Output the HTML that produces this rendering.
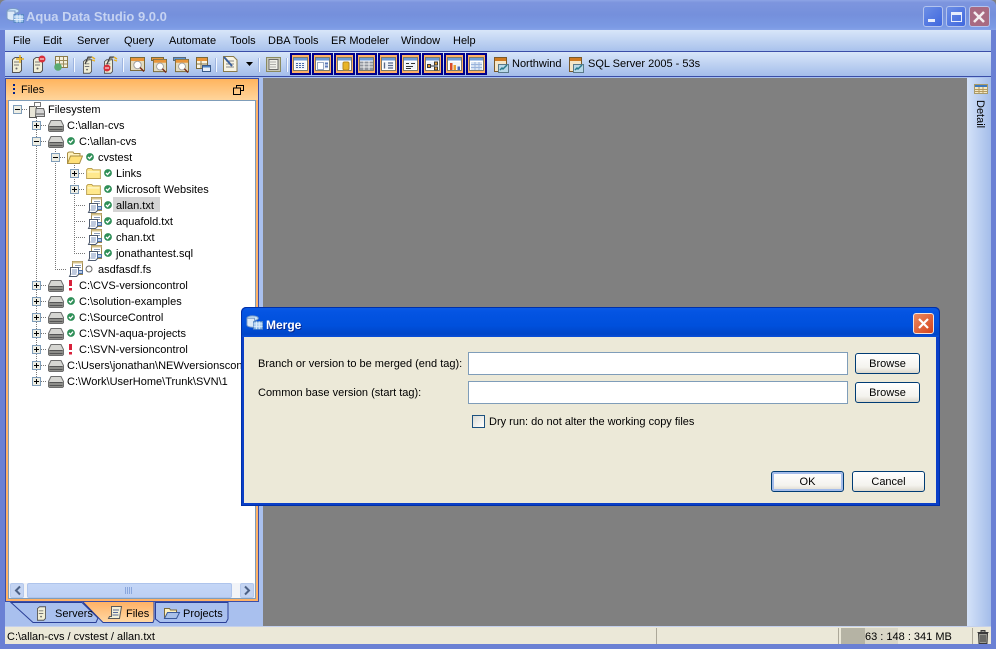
<!DOCTYPE html>
<html><head><meta charset="utf-8"><style>
html,body{margin:0;padding:0;width:996px;height:649px;overflow:hidden;background:#808080}
body{font:11px/14px "Liberation Sans",sans-serif;color:#000;position:relative}
.a,.t{position:absolute}
.t{white-space:nowrap;height:14px;margin-top:1px}
svg{position:absolute;overflow:visible}
.btn{position:absolute;box-sizing:border-box;border:1px solid #003c74;border-radius:3px;background:linear-gradient(#fff,#f4f3ee 70%,#dcd8cc);text-align:center;line-height:20px}
.inp{position:absolute;box-sizing:border-box;background:#fff;border:1px solid #7f9db9;left:468px;width:380px;height:23px}
.tb{position:absolute;top:53px;width:21px;height:22px;box-sizing:border-box;border:2px solid #00008b;background:#ffb266}
.sep{position:absolute;top:58px;width:1px;height:14px;background:#f4f8ff;border-left:1px solid #9db4e0}
</style></head><body>
<svg width="0" height="0" style="position:absolute"><defs>
<symbol id="drive" viewBox="0 0 16 12"><path d="M3 .5h10l2.500 5v5l-1 1h-13l-1-1v-5z" fill="#d6d6d2" stroke="#6e6e6e"/><path d="M1 6h14v5H1z" fill="#8e8e8a"/><path d="M1.500 6.500h13M1.500 9.500h13" stroke="#555"/></symbol>
<symbol id="folder" viewBox="0 0 16 12"><path d="M.5 2 2 .5h4L7.500 2h8v9.500H.5z" fill="#ffe88c" stroke="#b89b4a"/><path d="M1.500 3.500h13V5h-13z" fill="#fff7c8"/></symbol>
<symbol id="ofolder" viewBox="0 0 16 13"><path d="M.5 12.500V2L2 1h4l1 1.500h6V5" fill="#fff2bd" stroke="#a98f45"/><path d="M.5 12.500 3.500 5h12l-3 7.500z" fill="#ffe078" stroke="#a98f45"/></symbol>
<symbol id="doc" viewBox="0 0 16 16"><path d="M4.500.5h10v13h-10z" fill="#fff" stroke="#a08a50"/><path d="M4.500.5h10v2h-10z" fill="#d8c48c"/><path d="M7 4.500h6M7 6.500h6" stroke="#8a9ab4"/><path d="M2.500 6.500h8v7l-2 2h-7l1-2z" fill="#fff" stroke="#4e5a6e"/><path d="M4 9h5M4 11h5M3.500 13h5" stroke="#7f95bd"/><path d="M10.500 9.500h4v3h-4z" fill="#b8cce8" stroke="#4e6ea0"/></symbol>
<symbol id="chk" viewBox="0 0 8 8"><circle cx="4" cy="4" r="3.900" fill="#2f8f58"/><path d="M2 4l1.500 1.500L6 2.700" stroke="#fff" stroke-width="1.300" fill="none"/></symbol>
<symbol id="plus" viewBox="0 0 9 9"><rect x=".5" y=".5" width="8" height="8" fill="#eeeee4" stroke="#7f9db9"/><path d="M2 4.500h5M4.500 2v5" stroke="#000"/></symbol>
<symbol id="minus" viewBox="0 0 9 9"><rect x=".5" y=".5" width="8" height="8" fill="#eeeee4" stroke="#7f9db9"/><path d="M2 4.500h5" stroke="#000"/></symbol>
<symbol id="grid" viewBox="0 0 15 14"><path d="M.5.500h14v13H.5z" fill="#fff" stroke="#7c7c6c"/><path d="M1 1h13v2.500H1z" fill="#6a9ad8"/><path d="M2 5h11v7H2z" fill="#f0f4fa"/></symbol>
<symbol id="server" viewBox="0 0 10 16"><path d="M.5 2.500 3 .5h6.500v13l-2 2H.5z" fill="#f0eed6" stroke="#555"/><path d="M2 5h5M2 8h5" stroke="#777"/><circle cx="4.500" cy="11.500" r="1" fill="#666"/></symbol>
<symbol id="mag" viewBox="0 0 15 15"><path d="M.5.500h14v13H.5z" fill="#e4dcc0" stroke="#7a6a3a"/><path d="M1 1h13v3H1z" fill="#e8953a"/><circle cx="7.500" cy="8" r="3.700" fill="#fff" stroke="#a0a0a0"/><path d="M10 10.500l4 4" stroke="#7a2a1a" stroke-width="1.500"/></symbol>
<symbol id="conn" viewBox="0 0 15 16"><path d="M.5.500h12v14H.5z" fill="#f4e6c8" stroke="#7a5a2a"/><path d="M1 1h11v3H1z" fill="#cf7a20"/><path d="M4.500 7.500h10v8h-10z" fill="#b8d8e8" stroke="#5a7a8a"/><path d="M6 13l2-2 1 1 4-4" stroke="#2a7a8a" stroke-width="1.500" fill="none"/></symbol>
<symbol id="dbapp" viewBox="0 0 18 15"><ellipse cx="7" cy="3" rx="6" ry="2.500" fill="#c8e4fa" stroke="#7a9ac4"/><path d="M1 3v7c0 1.500 3 2.500 6 2.500h2V3z" fill="#dceaf8" stroke="#7a9ac4"/><path d="M8 6.500h9.500v8H8z" fill="#9cc4ec" stroke="#5a8ac4"/><path d="M8 9h9.500M11 6.500v8M14 6.500v8M8 11.500h9.500" stroke="#e4f0fc"/></symbol>
</defs></svg>

<!-- frame -->
<div class="a" style="left:0;top:0;width:996px;height:30px;background:linear-gradient(#8da4e6 0,#7d95de 8%,#7590dc 50%,#7b9ae4 90%,#86a3e8 100%);border-radius:6px 6px 0 0"></div>
<div class="a" style="left:0;top:30px;width:5px;height:619px;background:#6a80d4"></div>
<div class="a" style="left:991px;top:30px;width:5px;height:619px;background:#6a80d4"></div>
<div class="a" style="left:0;top:644px;width:996px;height:5px;background:#6a80d4"></div>
<svg style="left:6px;top:8px" width="18" height="15"><use href="#dbapp"/></svg>
<div class="t" style="left:26px;top:9px;font-weight:bold;font-size:13px;color:#c6d3f2">Aqua Data Studio 9.0.0</div>
<!-- window buttons -->
<div class="a" style="left:923px;top:6px;width:20px;height:21px;box-sizing:border-box;border:1px solid #b4c4ee;border-radius:3px;background:linear-gradient(135deg,#6c8ee6,#3f67de)"><div class="a" style="left:4px;top:12px;width:7px;height:3px;background:#e8eefc"></div></div>
<div class="a" style="left:946px;top:6px;width:20px;height:21px;box-sizing:border-box;border:1px solid #b4c4ee;border-radius:3px;background:linear-gradient(135deg,#6c8ee6,#3f67de)"><div class="a" style="left:4px;top:5px;width:11px;height:10px;box-sizing:border-box;border:1px solid #e8eefc;border-top-width:3px"></div></div>
<div class="a" style="left:969px;top:6px;width:21px;height:21px;box-sizing:border-box;border:1px solid #b4c4ee;border-radius:3px;background:#a86a82"><svg style="left:3px;top:4px" width="12" height="12"><path d="M1 1l10 10M11 1L1 11" stroke="#f4eef0" stroke-width="2.500"/></svg></div>

<!-- menu -->
<div class="a" style="left:5px;top:30px;width:986px;height:21px;background:linear-gradient(#d8e6f9,#a9c2ec)"></div>
<div class="a" style="left:5px;top:51px;width:986px;height:1px;background:#3b4ea8"></div>
<div class="t" style="left:13px;top:33px">File</div>
<div class="t" style="left:43px;top:33px">Edit</div>
<div class="t" style="left:77px;top:33px">Server</div>
<div class="t" style="left:124px;top:33px">Query</div>
<div class="t" style="left:169px;top:33px">Automate</div>
<div class="t" style="left:230px;top:33px">Tools</div>
<div class="t" style="left:268px;top:33px">DBA Tools</div>
<div class="t" style="left:331px;top:33px">ER Modeler</div>
<div class="t" style="left:401px;top:33px">Window</div>
<div class="t" style="left:453px;top:33px">Help</div>

<!-- toolbar -->
<div class="a" style="left:5px;top:52px;width:986px;height:24px;background:linear-gradient(#d8e6f9,#a4bdea)"></div>
<div class="a" style="left:5px;top:76px;width:986px;height:1px;background:#3b4ea8"></div>
<div class="a" style="left:5px;top:77px;width:986px;height:1px;background:#a9c0ee"></div>

<svg style="left:12px;top:57px" width="10" height="16"><use href="#server"/></svg>
<svg style="left:16px;top:55px" width="8" height="8"><path d="M4 0v8M0 4h8" stroke="#e8b020" stroke-width="1.500"/></svg>
<svg style="left:33px;top:57px" width="10" height="16"><use href="#server"/></svg>
<svg style="left:38px;top:55px" width="8" height="8"><circle cx="4" cy="4" r="3.500" fill="#d8303a"/><path d="M2 4h4" stroke="#fff"/></svg>
<svg style="left:55px;top:56px" width="13" height="13"><path d="M.5.500h12v11H.5z" fill="#f4efdc" stroke="#8a7a4a"/><path d="M1 4.500h11M1 8h11M4.500 1v10M8.500 1v10" stroke="#9a8a5a"/></svg>
<svg style="left:54px;top:63px" width="8" height="8"><circle cx="4" cy="4" r="3.800" fill="#5aaa70"/></svg>
<div class="sep" style="left:73px"></div>
<svg style="left:83px;top:59px" width="9" height="15"><use href="#server"/></svg>
<svg style="left:85px;top:56px" width="11" height="9"><path d="M0 8l3-7h4" stroke="#3a3a3a" fill="#8a8a80"/><path d="M7 1l3 2M7 4l3 1" stroke="#e8b020" stroke-width="1.400"/></svg>
<svg style="left:104px;top:59px" width="9" height="15"><use href="#server"/></svg>
<svg style="left:107px;top:56px" width="11" height="9"><path d="M0 8l3-7h4" stroke="#3a3a3a" fill="#8a8a80"/><path d="M7 1l3 2M7 4l3 1" stroke="#e8b020" stroke-width="1.400"/></svg>
<svg style="left:103px;top:64px" width="8" height="8"><circle cx="4" cy="4" r="3.500" fill="#d8303a"/><path d="M2 4h4" stroke="#fff"/></svg>
<div class="sep" style="left:122px"></div>
<svg style="left:130px;top:57px" width="15" height="15"><use href="#mag"/></svg>
<svg style="left:151px;top:57px" width="16" height="15"><path d="M.5.500h12v3H.5z" fill="#e8953a" stroke="#7a6a3a"/></svg>
<svg style="left:153px;top:59px" width="14" height="14"><use href="#mag"/></svg>
<svg style="left:173px;top:57px" width="15" height="15"><path d="M.5.500h12v3H.5z" fill="#5a92d0" stroke="#5a6a7a"/></svg>
<svg style="left:175px;top:59px" width="14" height="14"><use href="#mag"/></svg>
<svg style="left:196px;top:57px" width="15" height="15"><path d="M.5.500h11v11H.5z" fill="#f8f4e4" stroke="#7a6a3a"/><path d="M1 1h10v3H1z" fill="#e8953a"/><path d="M1 7h10M5 4v7" stroke="#8a7a4a"/><path d="M6.500 8.500h8v6h-8z" fill="#e8f0fa" stroke="#3a5a8a"/><path d="M7 9h7v1.500H7z" fill="#4a82c4"/></svg>
<div class="sep" style="left:215px"></div>
<svg style="left:223px;top:56px" width="15" height="16"><path d="M.5.500h10l3.500 3.500v11.500H.5z" fill="#f8f4e4" stroke="#8a7a4a"/><path d="M3 5h8M3 8h8M3 11h8" stroke="#8a8a8a"/><path d="M1 1l8 9" stroke="#3a5f9c" stroke-width="2"/></svg>
<svg style="left:246px;top:62px" width="7" height="4"><path d="M0 0h7L3.500 4z" fill="#000"/></svg>
<div class="sep" style="left:258px"></div>
<svg style="left:266px;top:57px" width="15" height="15"><path d="M.5.500h14v14H.5z" fill="#c8c8b8" stroke="#8a8a60"/><path d="M3 2.500h9v10H3z" fill="#f0f0ea" stroke="#6a6a6a"/><path d="M4.500 5h6M4.500 7.500h6M4.500 10h6" stroke="#6a6a6a" stroke-dasharray="1 1"/></svg>
<div class="sep" style="left:286px"></div>

<div class="tb" style="left:290px"><svg style="left:1px;top:2px" width="15" height="14"><use href="#grid"/><path d="M3 6.500h9M3 8.500h9M3 10.500h9" stroke="#4a6aaa" stroke-dasharray="2 1"/></svg></div>
<div class="tb" style="left:312px"><svg style="left:1px;top:2px" width="15" height="14"><use href="#grid"/><path d="M2.500 5.500h6v7h-6z" fill="#fff" stroke="#9aaac4"/><path d="M10 6.500h3M10 9.500h3" stroke="#5a7aba" stroke-width="2"/></svg></div>
<div class="tb" style="left:334px"><svg style="left:1px;top:2px" width="15" height="14"><use href="#grid"/><rect x="6" y="5" width="6" height="8" rx="1.500" fill="#e8b428" stroke="#b88a20"/></svg></div>
<div class="tb" style="left:356px"><svg style="left:1px;top:2px" width="15" height="14"><use href="#grid"/><path d="M1 4.500h13V13H1z" fill="#8f949c"/><path d="M1 7h13M1 10h13M5 4.500V13M10 4.500V13" stroke="#eee"/></svg></div>
<div class="tb" style="left:378px"><svg style="left:1px;top:2px" width="15" height="14"><use href="#grid"/><path d="M3.500 5.500v6M7 6h5M7 8.500h5M7 11h5" stroke="#5a6a8a" stroke-width="1.300"/></svg></div>
<div class="tb" style="left:400px"><svg style="left:1px;top:2px" width="15" height="14"><use href="#grid"/><path d="M3 6.500h3M8 6.500h4M3 9.500h7M3 11.500h5" stroke="#333"/></svg></div>
<div class="tb" style="left:422px"><svg style="left:1px;top:2px" width="15" height="14"><use href="#grid"/><path d="M2.500 7.500h3v3h-3zM9.500 5h3v3h-3zM9.500 10h3v3h-3z" fill="#e8a030" stroke="#3a3a3a"/><path d="M5.500 9h4" stroke="#333"/></svg></div>
<div class="tb" style="left:444px"><svg style="left:1px;top:2px" width="15" height="14"><use href="#grid"/><path d="M3 6h2.500v7H3z" fill="#d84a2a"/><path d="M6.500 8H9v5H6.500z" fill="#e8a030"/><path d="M10.500 9.500H13V13h-2.500z" fill="#4a6ab4"/></svg></div>
<div class="tb" style="left:466px"><svg style="left:1px;top:2px" width="15" height="14"><use href="#grid"/><path d="M2 5h11v8H2z" fill="#d8e4f4"/><path d="M2 7.500h11M2 10.500h11M6 5v8M10 5v8" stroke="#9ab4dc"/></svg></div>

<svg style="left:494px;top:57px" width="15" height="16"><use href="#conn"/></svg>
<div class="t" style="left:512px;top:56px">Northwind</div>
<svg style="left:569px;top:57px" width="15" height="16"><use href="#conn"/></svg>
<div class="t" style="left:588px;top:56px">SQL Server 2005 - 53s</div>

<!-- left bg -->
<div class="a" style="left:5px;top:78px;width:258px;height:548px;background:#a9c0ee"></div>
<div class="a" style="left:967px;top:78px;width:24px;height:548px;background:linear-gradient(90deg,#d4e2f8,#a4bdea)"></div>
<svg style="left:974px;top:84px" width="14" height="11"><path d="M.5.500h13v9H.5z" fill="#f4e8c4" stroke="#a89a6a"/><path d="M1 1h12v2H1z" fill="#3a78c0"/><path d="M1 5.500h12M1 7.500h12M5 3v6M9 3v6" stroke="#b49a60"/></svg>
<div class="t" style="left:987px;top:100px;margin:0;transform-origin:0 0;transform:rotate(90deg)">Detail</div>

<!-- files panel -->
<div class="a" style="left:5px;top:78px;width:254px;height:524px;box-sizing:border-box;border:1px solid #3b4ea8;background:#ffb266"></div>
<div class="a" style="left:6px;top:79px;width:252px;height:21px;background:linear-gradient(#ffb45e,#ffd59c)"></div>
<svg style="left:12px;top:83px" width="4" height="12"><path d="M1 1h2v2H1zM1 5h2v2H1zM1 9h2v2H1z" fill="#00208a"/></svg>
<div class="t" style="left:21px;top:82px">Files</div>
<svg style="left:233px;top:85px" width="11" height="10"><path d="M3.500 2.500V.5h7v5h-3M.5 3h7v6.500h-7z" fill="none" stroke="#000"/></svg>
<div class="a" style="left:8px;top:100px;width:248px;height:499px;box-sizing:border-box;background:#fff;border:1px solid #7f9db9"></div>

<!-- tree lines -->
<svg style="left:0;top:0" width="260" height="400"><g stroke="#777" stroke-dasharray="1 1" fill="none">
<path d="M36.500 116V381M55.500 147V269M74.500 163V253"/>
<path d="M22 109.500h6M41 125.500h6M41 141.500h6M41 285.500h6M41 301.500h6M41 317.500h6M41 333.500h6M41 349.500h6M41 365.500h6M41 381.500h6M60 157.500h6M79 173.500h6M79 189.500h6M74 205.500h12M74 221.500h12M74 237.500h12M74 253.500h12M55 269.500h12"/></g></svg>
<div class="a" style="left:113px;top:197px;width:47px;height:15px;background:#d4d4d4"></div>

<svg style="left:13px;top:105px" width="9" height="9"><use href="#minus"/></svg>
<svg style="left:29px;top:102px" width="16" height="16"><path d="M.5 4.500h7v11h-7z" fill="#e8e6d8" stroke="#555"/><path d="M5.500.5h6v4h-6z" fill="#fff" stroke="#777"/><path d="M7 6.500h7.500l1 3v5h-9z" fill="#d4d4d4" stroke="#666"/><path d="M7 12h8" stroke="#555"/></svg>
<div class="t" style="left:48px;top:102px">Filesystem</div>

<svg style="left:32px;top:121px" width="9" height="9"><use href="#plus"/></svg>
<svg style="left:48px;top:120px" width="16" height="12"><use href="#drive"/></svg>
<div class="t" style="left:67px;top:118px">C:\allan-cvs</div>

<svg style="left:32px;top:137px" width="9" height="9"><use href="#minus"/></svg>
<svg style="left:48px;top:136px" width="16" height="12"><use href="#drive"/></svg>
<svg style="left:67px;top:137px" width="8" height="8"><use href="#chk"/></svg>
<div class="t" style="left:79px;top:134px">C:\allan-cvs</div>

<svg style="left:51px;top:153px" width="9" height="9"><use href="#minus"/></svg>
<svg style="left:67px;top:151px" width="16" height="13"><use href="#ofolder"/></svg>
<svg style="left:86px;top:153px" width="8" height="8"><use href="#chk"/></svg>
<div class="t" style="left:98px;top:150px">cvstest</div>

<svg style="left:70px;top:169px" width="9" height="9"><use href="#plus"/></svg>
<svg style="left:86px;top:168px" width="15" height="11"><use href="#folder"/></svg>
<svg style="left:104px;top:169px" width="8" height="8"><use href="#chk"/></svg>
<div class="t" style="left:116px;top:166px">Links</div>

<svg style="left:70px;top:185px" width="9" height="9"><use href="#plus"/></svg>
<svg style="left:86px;top:184px" width="15" height="11"><use href="#folder"/></svg>
<svg style="left:104px;top:185px" width="8" height="8"><use href="#chk"/></svg>
<div class="t" style="left:116px;top:182px">Microsoft Websites</div>

<svg style="left:87px;top:197px" width="16" height="16"><use href="#doc"/></svg>
<svg style="left:104px;top:201px" width="8" height="8"><use href="#chk"/></svg>
<div class="t" style="left:116px;top:198px">allan.txt</div>

<svg style="left:87px;top:213px" width="16" height="16"><use href="#doc"/></svg>
<svg style="left:104px;top:217px" width="8" height="8"><use href="#chk"/></svg>
<div class="t" style="left:116px;top:214px">aquafold.txt</div>

<svg style="left:87px;top:229px" width="16" height="16"><use href="#doc"/></svg>
<svg style="left:104px;top:233px" width="8" height="8"><use href="#chk"/></svg>
<div class="t" style="left:116px;top:230px">chan.txt</div>

<svg style="left:87px;top:245px" width="16" height="16"><use href="#doc"/></svg>
<svg style="left:104px;top:249px" width="8" height="8"><use href="#chk"/></svg>
<div class="t" style="left:116px;top:246px">jonathantest.sql</div>

<svg style="left:68px;top:261px" width="16" height="16"><use href="#doc"/></svg>
<svg style="left:85px;top:265px" width="8" height="8"><circle cx="4" cy="4" r="3" fill="#fff" stroke="#666"/></svg>
<div class="t" style="left:98px;top:262px">asdfasdf.fs</div>

<svg style="left:32px;top:281px" width="9" height="9"><use href="#plus"/></svg>
<svg style="left:48px;top:280px" width="16" height="12"><use href="#drive"/></svg>
<svg style="left:68px;top:280px" width="5" height="11"><path d="M1 0h3v6H1z" fill="#d8203a"/><path d="M1 8h3v2.500H1z" fill="#d8203a"/></svg>
<div class="t" style="left:79px;top:278px">C:\CVS-versioncontrol</div>

<svg style="left:32px;top:297px" width="9" height="9"><use href="#plus"/></svg>
<svg style="left:48px;top:296px" width="16" height="12"><use href="#drive"/></svg>
<svg style="left:67px;top:297px" width="8" height="8"><use href="#chk"/></svg>
<div class="t" style="left:79px;top:294px">C:\solution-examples</div>

<svg style="left:32px;top:313px" width="9" height="9"><use href="#plus"/></svg>
<svg style="left:48px;top:312px" width="16" height="12"><use href="#drive"/></svg>
<svg style="left:67px;top:313px" width="8" height="8"><use href="#chk"/></svg>
<div class="t" style="left:79px;top:310px">C:\SourceControl</div>

<svg style="left:32px;top:329px" width="9" height="9"><use href="#plus"/></svg>
<svg style="left:48px;top:328px" width="16" height="12"><use href="#drive"/></svg>
<svg style="left:67px;top:329px" width="8" height="8"><use href="#chk"/></svg>
<div class="t" style="left:79px;top:326px">C:\SVN-aqua-projects</div>

<svg style="left:32px;top:345px" width="9" height="9"><use href="#plus"/></svg>
<svg style="left:48px;top:344px" width="16" height="12"><use href="#drive"/></svg>
<svg style="left:68px;top:344px" width="5" height="11"><path d="M1 0h3v6H1z" fill="#d8203a"/><path d="M1 8h3v2.500H1z" fill="#d8203a"/></svg>
<div class="t" style="left:79px;top:342px">C:\SVN-versioncontrol</div>

<svg style="left:32px;top:361px" width="9" height="9"><use href="#plus"/></svg>
<svg style="left:48px;top:360px" width="16" height="12"><use href="#drive"/></svg>
<div class="t" style="left:67px;top:358px">C:\Users\jonathan\NEWversionscontrol</div>

<svg style="left:32px;top:377px" width="9" height="9"><use href="#plus"/></svg>
<svg style="left:48px;top:376px" width="16" height="12"><use href="#drive"/></svg>
<div class="t" style="left:67px;top:374px">C:\Work\UserHome\Trunk\SVN\1</div>

<!-- scrollbar -->
<div class="a" style="left:9px;top:583px;width:246px;height:15px;background:#f2f4f8"></div>
<div class="a" style="left:10px;top:583px;width:14px;height:15px;box-sizing:border-box;border:1px solid #b4c8ec;border-radius:2px;background:#c4d4f2"><svg style="left:3px;top:2px" width="7" height="9"><path d="M6 .5 2 4.500 6 8.500" fill="none" stroke="#4d6185" stroke-width="2"/></svg></div>
<div class="a" style="left:27px;top:583px;width:205px;height:15px;box-sizing:border-box;border:1px solid #aec4ec;border-radius:2px;background:linear-gradient(#c4d6f6,#bdd0f4)"></div>
<svg style="left:125px;top:587px" width="8" height="7"><path d="M.5 0v7M2.500 0v7M4.500 0v7M6.500 0v7" stroke="#8aa6dc"/></svg>
<div class="a" style="left:240px;top:583px;width:14px;height:15px;box-sizing:border-box;border:1px solid #b4c8ec;border-radius:2px;background:#c4d4f2"><svg style="left:3px;top:2px" width="7" height="9"><path d="M1 .5 5 4.500 1 8.500" fill="none" stroke="#4d6185" stroke-width="2"/></svg></div>

<!-- tabs -->
<svg style="left:0;top:600px" width="240" height="28">
<path d="M11 2.500H82L98 18l-2 4.500H33z" fill="#a9c0ee" stroke="#2a3f98"/>
<path d="M155.500 2.500H228V19l-2 3.500H160L155.500 19z" fill="#a9c0ee" stroke="#2a3f98"/>
<defs><linearGradient id="og" x1="0" y1="0" x2="0" y2="1"><stop offset="0" stop-color="#ffb266"/><stop offset="1" stop-color="#ffd8a4"/></linearGradient></defs>
<path d="M83 2h71v17l-1 3.500h-50z" fill="url(#og)"/><path d="M83 2 103 22.500H153l1-3V2" fill="none" stroke="#2a3f98" stroke-width="1"/>
</svg>
<svg style="left:37px;top:606px" width="9" height="15"><use href="#server"/></svg>
<div class="t" style="left:55px;top:606px">Servers</div>
<svg style="left:108px;top:606px" width="14" height="14"><path d="M3.500.5h10l-2 12H.5l1-2h2z" fill="#f4f0d8" stroke="#5a5a5a"/><path d="M5 4h6M5 6.500h5M4.500 9h6" stroke="#5a6a9a"/></svg>
<div class="t" style="left:126px;top:606px">Files</div>
<svg style="left:164px;top:607px" width="16" height="12"><path d="M.5 11.500V1.500h5l1 1.500h6v2.500" fill="#fff2bd" stroke="#7a6a3a"/><path d="M.5 11.500l3-6h12l-3 6z" fill="#a8c0e8" stroke="#3a5a9a"/></svg>
<div class="t" style="left:183px;top:606px">Projects</div>

<!-- status bar -->
<div class="a" style="left:5px;top:626px;width:986px;height:1px;background:#c4d0ec"></div>
<div class="a" style="left:5px;top:627px;width:986px;height:17px;background:#ebe8d8"></div>
<div class="t" style="left:7px;top:629px">C:\allan-cvs / cvstest / allan.txt</div>
<div class="a" style="left:656px;top:628px;width:1px;height:16px;background:#aca899"></div>
<div class="a" style="left:838px;top:628px;width:1px;height:16px;background:#aca899"></div>
<div class="a" style="left:972px;top:628px;width:1px;height:16px;background:#aca899"></div>
<div class="a" style="left:841px;top:628px;width:24px;height:16px;background:#b5b3a4"></div>
<div class="a" style="left:865px;top:628px;width:33px;height:16px;background:#d9d6c6"></div>
<div class="t" style="left:865px;top:629px">63 : 148 : 341 MB</div>
<svg style="left:977px;top:630px" width="12" height="14"><path d="M.5 2.500h11M4 2.500V.5h4v2M1.500 3.500h9l-.5 10H2z" fill="#9a9a92" stroke="#3a3a3a"/><path d="M4 5v7M6 5v7M8 5v7" stroke="#3a3a3a"/></svg>

<!-- dialog -->
<div class="a" style="left:241px;top:307px;width:699px;height:199px;box-sizing:border-box;border-radius:5px 5px 0 0;background:#0a3fc8;box-shadow:inset 0 0 0 1px #0030a8"></div>
<div class="a" style="left:242px;top:308px;width:697px;height:29px;border-radius:5px 5px 0 0;background:linear-gradient(#0a5ae6,#0454e2 15%,#0050dc 60%,#0046c8 90%,#0a4fd8)"></div>
<div class="a" style="left:244px;top:337px;width:692px;height:166px;background:#ece9d8"></div>
<svg style="left:246px;top:315px" width="17" height="15"><use href="#dbapp"/></svg>
<div class="t" style="left:266px;top:317px;font-weight:bold;font-size:12px;color:#fff;text-shadow:1px 1px #0a2a90">Merge</div>
<div class="a" style="left:913px;top:313px;width:21px;height:21px;box-sizing:border-box;border:1px solid #f4e4dc;border-radius:3px;background:linear-gradient(135deg,#ec8a60,#d4431c)"><svg style="left:4px;top:4px" width="11" height="11"><path d="M1 1l9 9M10 1l-9 9" stroke="#fff" stroke-width="2.200"/></svg></div>

<div class="t" style="left:258px;top:356px">Branch or version to be merged (end tag):</div>
<div class="t" style="left:258px;top:385px">Common base version (start tag):</div>
<div class="inp" style="top:352px"></div>
<div class="inp" style="top:381px"></div>
<div class="btn" style="left:855px;top:353px;width:65px;height:21px">Browse</div>
<div class="btn" style="left:855px;top:382px;width:65px;height:21px">Browse</div>
<div class="a" style="left:472px;top:415px;width:13px;height:13px;box-sizing:border-box;border:1px solid #1c5180;background:linear-gradient(135deg,#dcdcd4,#fff)"></div>
<div class="t" style="left:489px;top:414px">Dry run: do not alter the working copy files</div>
<div class="btn" style="left:771px;top:471px;width:73px;height:21px;box-shadow:inset 0 0 0 2px #a4bcea">OK</div>
<div class="btn" style="left:852px;top:471px;width:73px;height:21px">Cancel</div>
</body></html>
